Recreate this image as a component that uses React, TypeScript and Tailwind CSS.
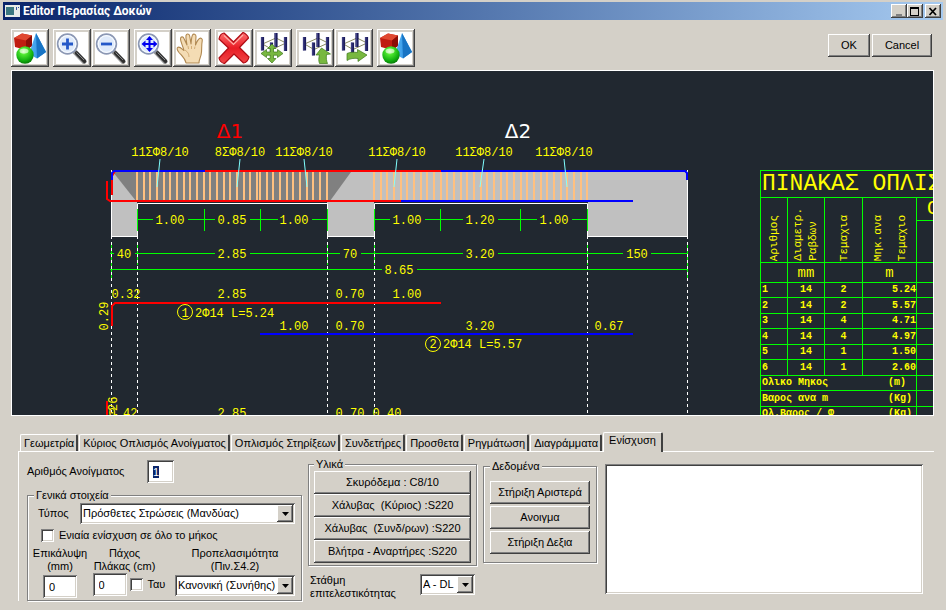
import React, { useEffect, useRef } from "react";

const raised =
  "shadow-[inset_-1px_-1px_0_#404040,inset_1px_1px_0_#ffffff,inset_-2px_-2px_0_#808080]";
const sunken =
  "shadow-[inset_1px_1px_0_#808080,inset_-1px_-1px_0_#ffffff,inset_2px_2px_0_#404040,inset_-2px_-2px_0_#d4d0c8]";
const etched =
  "border border-[#808080] shadow-[1px_1px_0_#ffffff,inset_1px_1px_0_#ffffff]";

/* ---------- toolbar icons ---------- */

const ShapesIcon = () => (
  <svg width="32" height="32" viewBox="0 0 32 32">
    <defs>
      <radialGradient id="ball" cx="0.42" cy="0.3" r="0.75">
        <stop offset="0" stopColor="#d8ffc8" />
        <stop offset="0.25" stopColor="#4fe830" />
        <stop offset="0.7" stopColor="#12b010" />
        <stop offset="1" stopColor="#067006" />
      </radialGradient>
      <linearGradient id="pyramid" x1="0" y1="0" x2="1" y2="0">
        <stop offset="0" stopColor="#58b4f4" />
        <stop offset="1" stopColor="#1c84dc" />
      </linearGradient>
    </defs>
    <path d="M0 6 8 1.500 18 3.500 18 14 12 18 1 15Z" fill="#c01c10" />
    <path d="M0 6 8 1.500 18 3.500 12 8.500Z" fill="#e04830" />
    <path d="M12 8.500 18 3.500 18 14 12 18Z" fill="#8c0c06" />
    <path d="M22 1 32 20 23 26.500 15 22Z" fill="url(#pyramid)" />
    <path d="M22 1 32 20 23 26.500Z" fill="#1874c4" />
    <circle cx="11" cy="23" r="8.700" fill="url(#ball)" />
    <ellipse cx="10" cy="19" rx="4.500" ry="2.500" fill="#e8ffe0" opacity="0.7" />
  </svg>
);

const Lens = ({ children }: { children: React.ReactNode }) => (
  <svg width="32" height="32" viewBox="0 0 32 32">
    <path d="M18.500 19.500 28 29.500" stroke="#9a9a9a" strokeWidth="5" strokeLinecap="round" />
    <path d="M20.500 21 28.500 29.300" stroke="#303030" strokeWidth="3.600" strokeLinecap="round" />
    <path d="M20.500 20.500 28 28" stroke="#8a8a8a" strokeWidth="1" />
    <circle cx="11.500" cy="12" r="9.800" fill="#dfeafa" stroke="#8c98b4" strokeWidth="1.800" />
    <circle cx="11.500" cy="12" r="8.300" fill="none" stroke="#f6faff" strokeWidth="1.200" />
    {children}
  </svg>
);

const ZoomInIcon = () => (
  <Lens>
    <path d="M6 12H17M11.500 6.500V17.500" stroke="#2458c8" strokeWidth="2.800" />
  </Lens>
);

const ZoomOutIcon = () => (
  <Lens>
    <path d="M6 12H17" stroke="#2458c8" strokeWidth="2.800" />
  </Lens>
);

const ZoomExtentsIcon = () => (
  <Lens>
    <path d="M6 12H19M12.500 5.500V18.500" stroke="#0000f0" strokeWidth="2" />
    <path
      d="M12.500 4 16 8H9ZM12.500 20 16 16H9ZM4.500 12 8.500 8.500V15.500ZM20.500 12 16.500 8.500V15.500Z"
      fill="#0000f0"
    />
  </Lens>
);

const HandIcon = () => (
  <svg width="32" height="32" viewBox="0 0 32 32">
    <path
      d="M10 31C9 26 6 24 3 20.500 1 18 .5 16 2 15.200 4 14.500 6 17 8 18.500 7 14 4.500 10 4.500 7 4.500 4.500 7 4 8 6.500L11 13C10.500 9.500 9.500 6 10 3.500 10.500 1.500 13.300 1.500 13.700 4L15 12C15.300 9 15.500 5 16.500 3 17.500 1.500 20 2 20 4.500L19.500 13C20.500 10.500 22 7.500 23.500 6.500 25 5.500 26.800 7 26.200 9 25.500 12.500 25.800 17 25.500 20 25.200 25 23 27 23 31Z"
      fill="#f4dcb4"
      stroke="#b08850"
      strokeWidth="1.100"
      strokeLinejoin="round"
    />
    <path
      d="M9 18C12 20 13 22 13 25M12 14 12.500 17M15.500 14V17M19 14.500 18.500 17"
      fill="none"
      stroke="#cfa870"
      strokeWidth="0.900"
    />
  </svg>
);

const DeleteIcon = () => (
  <svg width="32" height="32" viewBox="0 0 32 32">
    <defs>
      <linearGradient id="cross" x1="0" y1="0" x2="0" y2="1">
        <stop offset="0" stopColor="#ff7070" />
        <stop offset="0.5" stopColor="#e81c24" />
        <stop offset="1" stopColor="#f04848" />
      </linearGradient>
    </defs>
    <path
      d="M6 1 15.500 10 25 .5C27 1 30 4 30.500 6L21.500 15.500 31 25C30.500 28 28 31 25.500 31L16 22 6.500 31.500C4 31 1.500 28.500 1 26L10.500 16 1 7C1.500 4 3.500 1.500 6 1Z"
      fill="url(#cross)"
      stroke="#b00c14"
      strokeWidth="1.200"
      strokeLinejoin="round"
    />
    <path d="M6 3.500 15.500 12.500 25 3" fill="none" stroke="#ffb0a8" strokeWidth="1.200" />
  </svg>
);

const Frame = ({ children }: { children: React.ReactNode }) => (
  <svg width="32" height="32" viewBox="0 0 32 32">
    <path
      d="M5.500 12 19 6 29 11 15 17.500Z"
      fill="none"
      stroke="#8a8a60"
      strokeWidth="1"
    />
    <path
      d="M5.500 5V18.500M19 1V15M28.500 5V19M14.500 10.500V23.500"
      stroke="#1c1c5c"
      strokeWidth="3.200"
    />
    <path
      d="M4.800 5V18.500M18.300 1V15M27.800 5V19M13.800 10.500V23.500"
      stroke="#5858a0"
      strokeWidth="0.800"
    />
    {children}
  </svg>
);

const FrameMoveIcon = () => (
  <Frame>
    <path
      d="M15 12 19 16.500H16.500V20H20.500V17.500L26 21.500 20.500 25.500V23.200H16.500V26.500H19L15 31 10.500 26.500H13.200V23.200H9.500V25.500L4 21.500 9.500 17.500V20H13.200V16.500H10.500Z"
      fill="#78b840"
      stroke="#3c7818"
      strokeWidth="0.700"
    />
  </Frame>
);

const FrameUpIcon = () => (
  <Frame>
    <path
      d="M22.500 16 31.500 22 27.500 22.500C27 26 27.500 29 28.500 31.500H20.500C19.500 29 19.500 26 20.500 23H17Z"
      fill="#78b840"
      stroke="#3c7818"
      strokeWidth="0.700"
    />
  </Frame>
);

const FrameRightIcon = () => (
  <Frame>
    <path
      d="M19.500 17.500 29 23 20 29.500V26.500C16 26 12 26.500 9 28.500V21.500C12 20 16 20 19.500 20.500Z"
      fill="#78b840"
      stroke="#3c7818"
      strokeWidth="0.700"
    />
  </Frame>
);

const toolGroups = [
  [{ name: "Σχήματα", icon: ShapesIcon }],
  [
    { name: "Μεγέθυνση", icon: ZoomInIcon },
    { name: "Σμίκρυνση", icon: ZoomOutIcon },
  ],
  [
    { name: "Προβολή όλων", icon: ZoomExtentsIcon },
    { name: "Μετακίνηση", icon: HandIcon },
  ],
  [
    { name: "Διαγραφή", icon: DeleteIcon },
    { name: "Μεταφορά φορέα", icon: FrameMoveIcon },
  ],
  [
    { name: "Φορέας πάνω", icon: FrameUpIcon },
    { name: "Φορέας δεξιά", icon: FrameRightIcon },
  ],
  [{ name: "Ιδιότητες", icon: ShapesIcon }],
];

/* ---------- beam drawing ---------- */

const spacing = 20 / 3;
const stirrups = [
  ...Array.from({ length: 19 }, (_, i) => Math.round(137 + i * spacing)),
  ...Array.from({ length: 11 }, (_, i) => Math.round(260 + i * spacing)),
  ...Array.from({ length: 33 }, (_, i) => Math.round(374 + i * spacing)),
];

const axes = [111, 137, 327, 374, 587, 687];

// y, then the start and end of every piece of the line
const dimensionLines = [
  { y: 219, parts: [[137, 153], [188, 215], [250, 278], [312, 328]] },
  { y: 219, parts: [[374, 390], [425, 463], [498, 537], [572, 588]] },
  { y: 253, parts: [[110, 114], [135, 215], [250, 340], [361, 463], [498, 623], [651, 688]] },
  { y: 269, parts: [[110, 382], [417, 688]] },
];

const stirrupLabels = [
  { x: 160, text: "11ΣΦ8/10", to: 157 },
  { x: 240, text: "8ΣΦ8/10", to: 237 },
  { x: 304, text: "11ΣΦ8/10", to: 307 },
  { x: 397, text: "11ΣΦ8/10", to: 394 },
  { x: 484, text: "11ΣΦ8/10", to: 480 },
  { x: 564, text: "11ΣΦ8/10", to: 567 },
];

const dimensions = [
  { x: 170, y: 224, text: "1.00" },
  { x: 232, y: 224, text: "0.85" },
  { x: 294, y: 224, text: "1.00" },
  { x: 407, y: 224, text: "1.00" },
  { x: 480, y: 224, text: "1.20" },
  { x: 554, y: 224, text: "1.00" },
  { x: 124, y: 258, text: "40" },
  { x: 232, y: 258, text: "2.85" },
  { x: 350, y: 258, text: "70" },
  { x: 480, y: 258, text: "3.20" },
  { x: 637, y: 258, text: "150" },
  { x: 399, y: 274, text: "8.65" },
  { x: 126, y: 298, text: "0.32" },
  { x: 232, y: 298, text: "2.85" },
  { x: 350, y: 298, text: "0.70" },
  { x: 407, y: 298, text: "1.00" },
  { x: 294, y: 330, text: "1.00" },
  { x: 350, y: 330, text: "0.70" },
  { x: 480, y: 330, text: "3.20" },
  { x: 609, y: 330, text: "0.67" },
  { x: 123, y: 417, text: "0.42" },
  { x: 232, y: 417, text: "2.85" },
  { x: 350, y: 417, text: "0.70" },
  { x: 387, y: 417, text: "0.40" },
];

const BeamDrawing = () => (
  <svg
    width="921"
    height="344"
    viewBox="12 71 921 344"
    className="block max-w-none font-['Liberation_Mono',monospace] text-[12px]"
  >
    {/* concrete */}
    <path
      d="M111 171H688V237H588V202H374V237H327V202H137V237H111Z"
      fill="#c0c0c0"
    />
    <path d="M113 172H351L330 201H136Z" fill="#808080" />
    <g fill="#ffc080" shapeRendering="crispEdges">
      {stirrups.map((x) => (
        <rect key={x} x={x - 1} y="172" width="2" height="28" />
      ))}
    </g>
    <path
      d="M111.500 170V236.500H137.500V203.500H327.500V236.500H374.500V203.500H587.500V236.500H687.500V170"
      fill="none"
      stroke="#ffffff"
    />

    {/* dimension lines */}
    <g fill="#00ff00">
      {dimensionLines.map((line) =>
        line.parts.map(([from, to]) => (
          <rect key={`${line.y}-${from}`} x={from} y={line.y} width={to - from} height="1" />
        ))
      )}
    </g>
    <g fill="none" stroke="#00ff00">
      <path d="M137.500 209V231M204.500 209V231M260.500 209V231M327.500 209V231M374.500 209V231M440.500 209V231M520.500 209V231M587.500 209V231" />
      <path d="M111.500 243V278M137.500 243V265M327.500 243V265M374.500 243V265M587.500 243V265M687.500 243V278" />
    </g>
    <g stroke="#ffffff" strokeDasharray="3 3">
      {axes.map((x) => (
        <path key={x} d={`M${x + 0.5} 236V414`} />
      ))}
    </g>

    {/* reinforcement */}
    <g fill="none" strokeWidth="2">
      <path d="M112 195V176L115 171M205 171H441" stroke="#ff0000" />
      <path d="M107 181V199L110 201H401" stroke="#ff0000" />
      <path d="M112 180V173L114 171H205M441 171H685L687 173V180M401 201H633" stroke="#0000ff" />
      <path d="M112 326V306L115 303H441" stroke="#ff0000" />
      <path d="M260 334H633" stroke="#0000ff" />
      <path d="M107 401V415" stroke="#ff0000" />
    </g>

    {stirrupLabels.map((s) => (
      <g key={s.x}>
        <path d={`M${s.x} 159L${s.to} 187`} stroke="#80ffff" />
        <text x={s.x} y="156" textAnchor="middle" fill="#ffff00">
          {s.text}
        </text>
      </g>
    ))}
    <g fill="#ffff00" textAnchor="middle">
      {dimensions.map((d) => (
        <text key={`${d.x}-${d.y}`} x={d.x} y={d.y}>
          {d.text}
        </text>
      ))}
      <text transform="translate(108 316) rotate(-90)">0.29</text>
      <text transform="translate(117 411) rotate(-90)">0.26</text>
      <text x="185" y="317">1</text>
      <text x="433" y="348">2</text>
    </g>
    <g fill="#ffff00">
      <text x="195" y="317">2Φ14 L=5.24</text>
      <text x="443" y="348">2Φ14 L=5.57</text>
    </g>
    <g fill="none" stroke="#ffff00">
      <circle cx="185" cy="312" r="7.500" />
      <circle cx="433" cy="344" r="7.500" />
    </g>
    <g textAnchor="middle" className="font-['DejaVu_Sans',sans-serif] text-[20px]">
      <text x="230" y="138" fill="#ff0000">Δ1</text>
      <text x="518" y="138" fill="#ffffff">Δ2</text>
    </g>
  </svg>
);

const bars = [
  { id: 1, diameter: 14, pieces: 2, length: "5.24" },
  { id: 2, diameter: 14, pieces: 2, length: "5.57" },
  { id: 3, diameter: 14, pieces: 4, length: "4.71" },
  { id: 4, diameter: 14, pieces: 4, length: "4.97" },
  { id: 5, diameter: 14, pieces: 1, length: "1.50" },
  { id: 6, diameter: 14, pieces: 1, length: "2.60" },
];

const totals = [
  { name: "Ολικο Μηκος", unit: "(m)" },
  { name: "Βαρος ανα m", unit: "(Kg)" },
  { name: "Ολ.Βαρος / Φ", unit: "(Kg)" },
];

const cell = "border border-[#00ff00] p-0";

const Vertical = ({ children }: { children: React.ReactNode }) => (
  <span className="inline-block rotate-180 text-left align-bottom whitespace-nowrap [writing-mode:vertical-rl]">
    {children}
  </span>
);

const BarTable = () => (
  <table className="w-[216px] table-fixed border-collapse font-['Liberation_Mono',monospace] text-[10px] leading-[12px] font-bold text-[#ffff00]">
    <colgroup>
      <col className="w-[27px]" />
      <col className="w-[37px]" />
      <col className="w-[38px]" />
      <col className="w-[54px]" />
      <col className="w-[60px]" />
    </colgroup>
    <thead className="text-[11px] font-normal">
      <tr className="h-[27px]">
        <th
          colSpan={5}
          className={`${cell} pl-px text-left text-[23px] leading-[24px] font-normal whitespace-nowrap`}
        >
          ΠΙΝΑΚΑΣ ΟΠΛΙΣ
        </th>
      </tr>
      <tr className="h-[23px]">
        <th rowSpan={2} className={`${cell} pb-px align-bottom font-normal`}>
          <Vertical>Αριθμος</Vertical>
        </th>
        <th rowSpan={2} className={`${cell} pb-px align-bottom leading-[15px] font-normal`}>
          <Vertical>
            Διαμετρ.
            <br />
            Ραβδων
          </Vertical>
        </th>
        <th rowSpan={2} className={`${cell} pb-px align-bottom font-normal`}>
          <Vertical>Τεμαχια</Vertical>
        </th>
        <th rowSpan={2} className={`${cell} pb-px align-bottom leading-[24px] font-normal`}>
          <Vertical>
            Μηκ.ανα
            <br />
            Τεμαχιο
          </Vertical>
        </th>
        <th className={`${cell} pl-2.5 text-left text-[20px] leading-[20px] font-normal`}>Ο</th>
      </tr>
      <tr className="h-[42px]">
        <th className={cell} />
      </tr>
      <tr className="h-[20px] text-[14px]">
        <th className={cell} />
        <th className={`${cell} font-normal`}>mm</th>
        <th className={cell} />
        <th className={`${cell} font-normal`}>m</th>
        <th className={cell} />
      </tr>
    </thead>
    <tbody>
      {bars.map((bar) => (
        <tr key={bar.id} className="odd:h-[15px] even:h-[16px]">
          <td className={`${cell} pl-px`}>{bar.id}</td>
          <td className={`${cell} text-center`}>{bar.diameter}</td>
          <td className={`${cell} text-center`}>{bar.pieces}</td>
          <td className={`${cell} text-right`}>{bar.length}</td>
          <td className={cell} />
        </tr>
      ))}
      {totals.map((total) => (
        <tr key={total.name} className="odd:h-[15px] even:h-[16px]">
          <td colSpan={4} className={`${cell} pl-px`}>
            <div className="flex">
              <span className="w-[126px]">{total.name}</span>
              <span>{total.unit}</span>
            </div>
          </td>
          <td className={cell} />
        </tr>
      ))}
    </tbody>
  </table>
);

/* ---------- form controls ---------- */

const Group = ({
  title,
  className,
  children,
}: {
  title: string;
  className: string;
  children: React.ReactNode;
}) => (
  <fieldset className={`${etched} ${className}`}>
    <legend className="bg-[#d4d0c8] px-0.5 leading-[14px]">{title}</legend>
    {children}
  </fieldset>
);

const PushButton = ({ label, className }: { label: string; className: string }) => (
  <button
    type="button"
    className={`${raised} h-[23px] bg-[#d4d0c8] whitespace-pre ${className}`}
  >
    {label}
  </button>
);

const Dropdown = ({
  id,
  value,
  className,
}: {
  id: string;
  value: string;
  className: string;
}) => (
  <div className={`relative h-[21px] ${className}`}>
    <select
      id={id}
      className={`${sunken} h-full w-full appearance-none bg-white pr-[18px] pl-[3px] outline-none`}
    >
      <option>{value}</option>
    </select>
    <span
      className={`${raised} pointer-events-none absolute top-0.5 right-0.5 bottom-0.5 flex w-4 items-center justify-center bg-[#d4d0c8]`}
    >
      <svg width="7" height="4" viewBox="0 0 7 4">
        <path d="M0 0H7L3.500 4Z" />
      </svg>
    </span>
  </div>
);

const checkbox = `${sunken} size-[13px] shrink-0 appearance-none bg-white`;
const textbox = `${sunken} h-[23px] bg-white px-1.5 outline-none`;

const tabs = [
  "Γεωμετρία",
  "Κύριος Οπλισμός Ανοίγματος",
  "Οπλισμός Στηρίξεων",
  "Συνδετήρες",
  "Προσθετα",
  "Ρηγμάτωση",
  "Διαγράμματα",
  "Ενίσχυση",
];

const materials = [
  "Σκυρόδεμα : C8/10",
  "Χάλυβας  (Κύριος) :S220",
  "Χάλυβας  (Συνδ/ρων) :S220",
  "Βλήτρα - Αναρτήρες :S220",
];

const App = () => {
  const spanRef = useRef<HTMLInputElement>(null);

  useEffect(() => {
    spanRef.current?.focus();
    spanRef.current?.select();
  }, []);

  return (
    <div className="min-h-screen overflow-hidden bg-[#d4d0c8] pt-0.5 font-['Liberation_Sans',sans-serif] text-[11px] leading-[13px] text-black">
      <header className="mx-[3px] flex h-[18px] items-center gap-[3px] bg-linear-to-r from-[#0a246a] to-[#a6caf0] pr-0.5 pl-0.5">
        <svg width="15" height="12" viewBox="0 0 15 12">
          <rect width="15" height="12" fill="#e8ece8" />
          <rect x="1" y="2" width="8" height="8" fill="#3c7880" />
          <rect x="11" y="2" width="1" height="3" fill="#3050a0" />
          <rect x="13" y="2" width="1" height="1" fill="#3050a0" />
        </svg>
        <h1 className="grow font-['Roboto',sans-serif] text-[12px] font-bold text-white">
          Editor Περασίας Δοκών
        </h1>
        <div className="flex">
          <button
            type="button"
            aria-label="Minimize"
            className={`${raised} flex h-3.5 w-4 items-center justify-center bg-[#d4d0c8]`}
          >
            <svg width="10" height="9" viewBox="0 0 10 9">
              <path d="M2 7H8V9H2Z" fill="#808080" />
            </svg>
          </button>
          <button
            type="button"
            aria-label="Maximize"
            className={`${raised} flex h-3.5 w-4 items-center justify-center bg-[#d4d0c8]`}
          >
            <svg width="10" height="9" viewBox="0 0 10 9">
              <path d="M0 0H9V9H0ZM1 2V8H8V2Z" fillRule="evenodd" />
            </svg>
          </button>
          <button
            type="button"
            aria-label="Close"
            className={`${raised} ml-0.5 flex h-3.5 w-4 items-center justify-center bg-[#d4d0c8]`}
          >
            <svg width="10" height="9" viewBox="0 0 10 9">
              <path d="M1.500 1 8 8M8 1 1.500 8" stroke="#000" strokeWidth="1.700" />
            </svg>
          </button>
        </div>
      </header>

      <div className="flex items-start justify-between pt-[9px] pr-3.5 pb-[3px] pl-[11px]">
        <div className="flex gap-1">
          {toolGroups.map((group, i) => (
            <div key={i} className="flex gap-px">
              {group.map((tool) => (
                <button
                  key={tool.name}
                  type="button"
                  aria-label={tool.name}
                  className={`${raised} flex size-[38px] items-center justify-center bg-[#d4d0c8]`}
                >
                  <span className="bg-white">
                    <tool.icon />
                  </span>
                </button>
              ))}
            </div>
          ))}
        </div>
        <div className="flex gap-0.5 pt-[5px]">
          <PushButton label="OK" className="w-[42px]" />
          <PushButton label="Cancel" className="w-[60px]" />
        </div>
      </div>

      <main>
        <div className="relative mr-3 ml-[11px] h-[346px] overflow-hidden border border-white bg-[#212830]">
          <BeamDrawing />
          <div className="absolute top-[99px] left-[748px]">
            <BarTable />
          </div>
        </div>

        <div className="mt-4 mr-3 ml-[18px]">
          <div role="tablist" className="flex items-end pl-0.5">
            {tabs.map((tab) => (
              <button
                key={tab}
                type="button"
                role="tab"
                aria-selected={tab === "Ενίσχυση"}
                className="mr-px h-[17px] rounded-t-xs border-t border-r-2 border-l border-t-white border-r-[#404040] border-l-white pr-0.5 pl-[3px] whitespace-nowrap aria-selected:z-10 aria-selected:-mb-px aria-selected:h-5 aria-selected:bg-[#d4d0c8] aria-selected:px-[5px] aria-selected:pb-1"
              >
                {tab}
              </button>
            ))}
          </div>

          <div
            role="tabpanel"
            className="flex items-start gap-1.5 border-t border-l border-white pr-[11px] pl-2"
          >
            <div className="w-[275px] shrink-0 pt-2">
              <div className="flex items-center">
                <label htmlFor="span" className="w-[120px]">
                  Αριθμός Ανοίγματος
                </label>
                <input
                  id="span"
                  ref={spanRef}
                  defaultValue="1"
                  className={`${textbox} w-[27px] selection:bg-[#0a246a] selection:text-white`}
                />
              </div>
              <Group title="Γενικά στοιχεία" className="mt-[5px] h-[113px] px-1.5">
                <div className="flex items-center pt-px pl-1">
                  <label htmlFor="type" className="w-[42px]">
                    Τύπος
                  </label>
                  <Dropdown id="type" value="Πρόσθετες Στρώσεις (Μανδύας)" className="w-[215px]" />
                </div>
                <div className="flex items-center gap-[5px] pt-[5px] pl-[7px]">
                  <input id="uniform" type="checkbox" className={checkbox} />
                  <label htmlFor="uniform">Ενιαία ενίσχυση σε όλο το μήκος</label>
                </div>
                <div className="flex items-start justify-between pt-[5px]">
                  <div className="flex w-[52px] flex-col items-center text-center">
                    <label htmlFor="cover" className="whitespace-nowrap">
                      Επικάλυψη
                      <br />
                      (mm)
                    </label>
                    <input id="cover" defaultValue="0" className={`${textbox} mt-0.5 w-[34px]`} />
                  </div>
                  <div className="w-[76px]">
                    <label htmlFor="slab" className="block w-[64px] text-center whitespace-nowrap">
                      Πάχος
                      <br />
                      Πλάκας (cm)
                    </label>
                    <div className="flex items-center gap-[3px]">
                      <input id="slab" defaultValue="0" className={`${textbox} w-[34px]`} />
                      <input id="tau" type="checkbox" className={checkbox} />
                      <label htmlFor="tau" className="pl-0.5">
                        Ταυ
                      </label>
                    </div>
                  </div>
                  <div className="flex w-[120px] flex-col items-center text-center">
                    <label htmlFor="workability">
                      Προπελασιμότητα
                      <br />
                      (Πιν.Σ4.2)
                    </label>
                    <Dropdown
                      id="workability"
                      value="Κανονική (Συνήθης)"
                      className="mt-0.5 w-full"
                    />
                  </div>
                </div>
              </Group>
            </div>

            <div className="w-[169px] shrink-0 pt-[5px]">
              <Group title="Υλικά" className="px-[5px] pb-0.5">
                <div className="flex flex-col">
                  {materials.map((material) => (
                    <PushButton key={material} label={material} className="w-full" />
                  ))}
                </div>
              </Group>
              <div className="flex items-start justify-between pt-2 pr-0.5 pl-0.5">
                <label htmlFor="level">
                  Στάθμη
                  <br />
                  επιτελεστικότητας
                </label>
                <Dropdown id="level" value="Α - DL" className="w-[55px]" />
              </div>
            </div>

            <Group title="Δεδομένα" className="mt-[7px] w-[114px] shrink-0 px-1.5 pt-2 pb-2">
              <div className="flex flex-col gap-0.5">
                <PushButton label="Στήριξη Αριστερά" className="w-full" />
                <PushButton label="Ανοιγμα" className="w-full" />
                <PushButton label="Στήριξη Δεξια" className="w-full" />
              </div>
            </Group>

            <textarea
              aria-label="Αποτελέσματα"
              className={`${sunken} mt-3 ml-0.5 h-[130px] min-w-0 grow resize-none bg-white p-1 outline-none`}
            />
          </div>
        </div>
      </main>
    </div>
  );
};

export default App;
